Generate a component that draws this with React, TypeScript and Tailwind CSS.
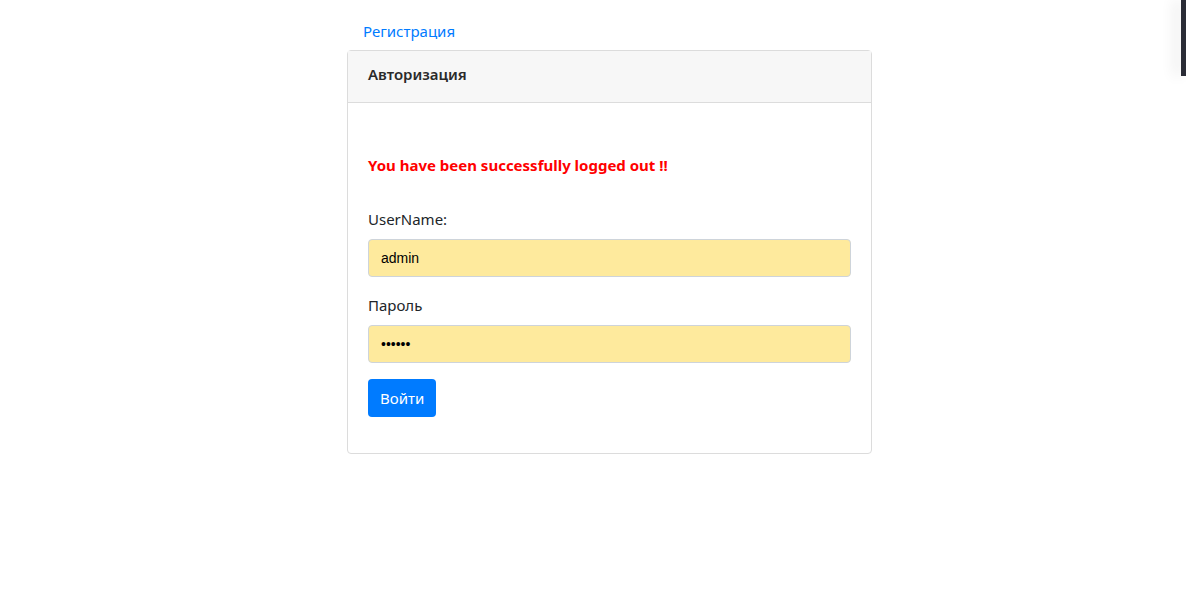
import React from "react";

const font = { fontFamily: '"Noto Sans", "Open Sans", sans-serif' };

export default function App() {
  return (
    <div className="relative min-h-[596px] bg-white text-[#212529]" style={font}>
      {/* side panel edge */}
      <div className="absolute right-0 top-0 h-[76px] w-[5px] bg-[#2a2c36] shadow-[-6px_0_14px_rgba(0,0,0,0.12)]" />

      <div className="ml-[347px] w-[525px] pt-[10px]">
        <nav className="flex">
          <a href="#" className="block px-4 pt-[9px] pb-[7px] text-[15px] leading-6 text-[#007bff]">
            Регистрация
          </a>
        </nav>

        <div className="rounded border border-[#dcdcdc]">
          <div className="h-[52px] border-b border-[#dcdcdc] bg-[#f7f7f7] px-5 pt-[11px]">
            <h5 className="text-[15px] font-semibold leading-6 text-[#2a2a2a]">Авторизация</h5>
          </div>

          <div className="px-5 pt-5 pb-9">
            <p className="mt-[30px] mb-[30px] text-[15px] font-bold leading-6 text-[#ff0000]">
              You have been successfully logged out !!
            </p>

            <form>
              <div className="mb-4">
                <label className="mb-2 block text-[15px] leading-6">UserName:</label>
                <input
                  type="text"
                  defaultValue="admin"
                  className="block h-[38px] w-full rounded border border-[#ced4da] bg-[#feea9d] px-3 text-[14px] text-black outline-none"
                  style={{ fontFamily: '"Liberation Sans", Arial, sans-serif' }}
                />
              </div>
              <div className="mb-4">
                <label className="mb-2 block text-[15px] leading-6">Пароль</label>
                <input
                  type="password"
                  defaultValue="123456"
                  className="block h-[38px] w-full rounded border border-[#ced4da] bg-[#feea9d] px-3 text-[14px] text-black outline-none"
                  style={{ fontFamily: '"Liberation Sans", Arial, sans-serif' }}
                />
              </div>
              <button
                type="button"
                className="h-[38px] rounded bg-[#007bff] px-3 text-[15px] leading-6 text-white"
              >
                Войти
              </button>
            </form>
          </div>
        </div>
      </div>
    </div>
  );
}
